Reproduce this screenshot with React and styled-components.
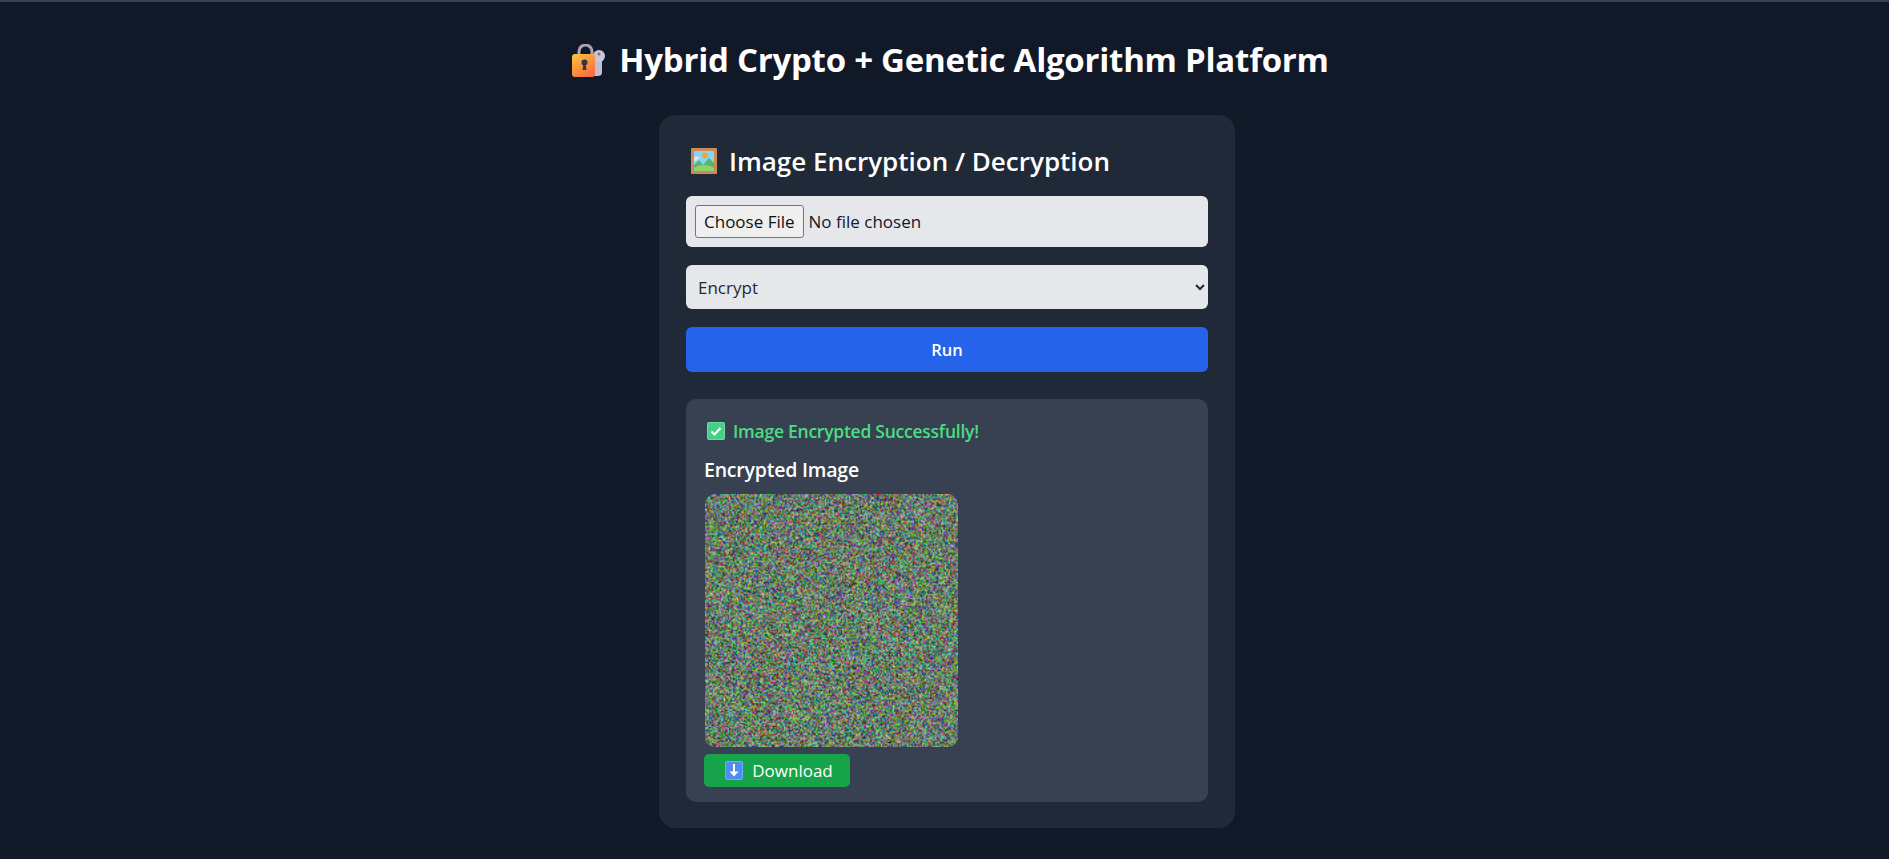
import { useEffect, useRef } from "react";
import styled, { createGlobalStyle } from "styled-components";

const GlobalStyle = createGlobalStyle`
    * {
        box-sizing: border-box;
    }
    body {
        margin: 0;
        background-color: #111827;
        font-family: "Open Sans", "Noto Sans", sans-serif;
        color: white;
    }
`;

const Page = styled.div`
    height: 859px;
    overflow: hidden;
    padding-left: 5px;
    border-top: 2px solid #374151;
    display: flex;
    flex-direction: column;
    align-items: center;
`;
const Title = styled.h1`
    margin: 36px 0 0 7px;
    height: 44px;
    display: flex;
    align-items: center;
    gap: 14px;
    font-size: 33px;
    line-height: 44px;
    font-weight: 700;
    letter-spacing: -0.25px;
`;
const Card = styled.div`
    margin-top: 33px;
    width: 576px;
    height: 713px;
    padding: 31px 27px 0;
    background-color: #1f2937;
    border-radius: 16px;
`;
const CardTitle = styled.h2`
    margin: 0 0 20px 5px;
    height: 30px;
    display: flex;
    align-items: center;
    gap: 12px;
    font-size: 26px;
    line-height: 30px;
    font-weight: 600;
`;
const FileBox = styled.div`
    height: 51px;
    padding: 0 9px;
    display: flex;
    align-items: center;
    gap: 5px;
    background-color: #e5e7eb;
    border-radius: 6px;
    color: #111827;
    font-size: 17px;
`;
const FileButton = styled.button`
    height: 33px;
    padding: 0 8px;
    background-color: #efefef;
    border: 1px solid #767676;
    border-radius: 3px;
    color: #111;
    font: inherit;
`;
const SelectBox = styled.select`
    display: block;
    width: 100%;
    height: 44px;
    margin-top: 18px;
    padding: 0 8px;
    background-color: #e5e7eb;
    border: none;
    border-radius: 6px;
    color: #1f2937;
    font-family: inherit;
    font-size: 17px;
`;
const RunButton = styled.button`
    display: block;
    width: 100%;
    height: 45px;
    margin-top: 18px;
    background-color: #2563eb;
    border: none;
    border-radius: 6px;
    color: white;
    font-family: inherit;
    font-size: 16.5px;
    font-weight: 600;
`;
const Result = styled.div`
    margin-top: 27px;
    height: 403px;
    padding: 19px 18px 0;
    background-color: #374151;
    border-radius: 10px;
`;
const Status = styled.p`
    margin: 0 0 0 3px;
    height: 26px;
    display: flex;
    align-items: center;
    gap: 8px;
    color: #4ade80;
    font-size: 17.5px;
    font-weight: 600;
    letter-spacing: -0.25px;
`;
const ResultTitle = styled.h3`
    margin: 12px 0 0;
    height: 28px;
    font-size: 19.5px;
    line-height: 28px;
    font-weight: 600;
    letter-spacing: -0.2px;
`;
const Noise = styled.canvas`
    display: block;
    width: 253px;
    height: 253px;
    margin: 10px 0 0 1px;
    border-radius: 10px;
`;
const DownloadButton = styled.button`
    width: 146px;
    height: 33px;
    margin-top: 7px;
    padding: 0 0 0 4px;
    display: flex;
    align-items: center;
    justify-content: center;
    gap: 9px;
    background-color: #16a34a;
    border: none;
    border-radius: 5px;
    color: white;
    font-family: inherit;
    font-size: 17px;
`;

function LockIcon() {
    return (
        <svg width="33" height="33" viewBox="0 0 33 33">
            <defs>
                <linearGradient id="lockFill" x1="0" y1="0" x2="0.6" y2="1">
                    <stop offset="0" stopColor="#fdc43f" />
                    <stop offset="1" stopColor="#f8703f" />
                </linearGradient>
            </defs>
            <path d="M22 14h3v-4h5v19c0 2-2 3-4 3h-4z" fill="#c3bdd4" />
            <circle cx="27" cy="12" r="6" fill="#cbc5da" />
            <circle cx="27" cy="10" r="1.5" fill="#77708a" />
            <path d="M7 12V7.5a6.5 6.5 0 0 1 13 0V12" fill="none" stroke="#aaa5b6" strokeWidth="3" />
            <rect x="0" y="10" width="23" height="23" rx="3" fill="url(#lockFill)" />
            <circle cx="12.5" cy="18.5" r="3" fill="#3b3242" />
            <path d="M11.4 20h2.2l.9 6h-4z" fill="#3b3242" />
        </svg>
    );
}

function PictureIcon() {
    return (
        <svg width="26" height="26" viewBox="0 0 26 26">
            <rect width="26" height="26" rx="1" fill="#c98a5c" />
            <rect x="3" y="3" width="20" height="20" fill="#86d4f2" />
            <circle cx="14" cy="7.5" r="2.8" fill="#f5a623" />
            <path d="M3 9c2-1.5 5-1 6 1l-6 4z" fill="#e2dcf2" />
            <path d="M3 17l5-5 4 5 6-7 5 5v8H3z" fill="#58b56a" />
            <path d="M3 23v-3c6-4 14-4 20 0v3z" fill="#8fd16a" />
        </svg>
    );
}

function CheckIcon() {
    return (
        <svg width="18" height="18" viewBox="0 0 18 18">
            <rect width="18" height="18" rx="2" fill="#6fdca4" />
            <rect x="1" y="1" width="16" height="16" rx="1.5" fill="#46cf85" />
            <path d="M4.5 9.5l3 3L13.5 6" fill="none" stroke="white" strokeWidth="2.2" />
        </svg>
    );
}

function DownIcon() {
    return (
        <svg width="18" height="19" viewBox="0 0 18 19">
            <rect width="18" height="19" rx="2" fill="#72a8f5" />
            <rect x="1" y="1" width="16" height="17" rx="1.5" fill="#4d8ef0" />
            <path d="M8 3h2v7.5h3.5L9 15.5l-4.5-5H8z" fill="white" />
        </svg>
    );
}

function NoiseImage() {
    const ref = useRef(null);

    useEffect(() => {
        const ctx = ref.current.getContext("2d");
        const img = ctx.createImageData(190, 190);
        // fixed seed so every render gives the same noise
        let seed = 12345;
        const rand = () => {
            seed = (seed * 1664525 + 1013904223) >>> 0;
            return seed / 4294967296;
        };
        for (let i = 0; i < img.data.length; i += 4) {
            img.data[i] = 10 + rand() * 190;
            img.data[i + 1] = 30 + rand() * 190;
            img.data[i + 2] = 10 + rand() * 190;
            img.data[i + 3] = 255;
        }
        ctx.putImageData(img, 0, 0);
    }, []);

    return <Noise ref={ref} width={190} height={190} />;
}

function App() {
    return (
        <>
            <GlobalStyle />
            <Page>
                <Title>
                    <LockIcon />
                    Hybrid Crypto + Genetic Algorithm Platform
                </Title>
                <Card>
                    <CardTitle>
                        <PictureIcon />
                        Image Encryption / Decryption
                    </CardTitle>
                    <FileBox>
                        <FileButton>Choose File</FileButton>
                        No file chosen
                    </FileBox>
                    <SelectBox>
                        <option>Encrypt</option>
                        <option>Decrypt</option>
                    </SelectBox>
                    <RunButton>Run</RunButton>
                    <Result>
                        <Status>
                            <CheckIcon />
                            Image Encrypted Successfully!
                        </Status>
                        <ResultTitle>Encrypted Image</ResultTitle>
                        <NoiseImage />
                        <DownloadButton>
                            <DownIcon />
                            Download
                        </DownloadButton>
                    </Result>
                </Card>
            </Page>
        </>
    );
}

export default App;
